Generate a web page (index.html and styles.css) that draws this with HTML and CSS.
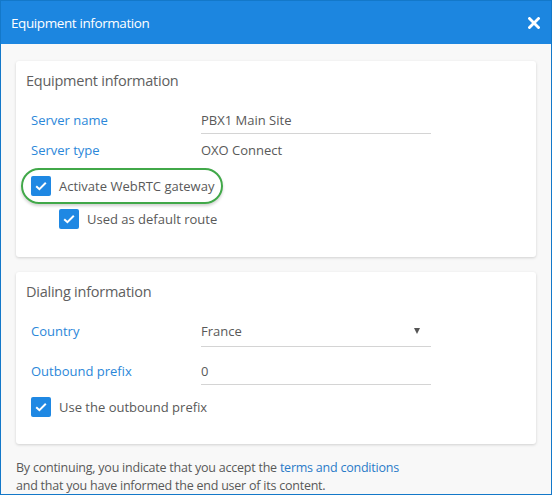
FILE: index.html
```html
<!DOCTYPE html>
<html>
<head>
<meta charset="utf-8">
<link rel="stylesheet" href="styles.css">
</head>
<body>
<div class="window">
  <div class="header">
    <span class="header-title">Equipment information</span>
    <svg class="close" width="12" height="12" viewBox="0 0 12 12"><path d="M1.5 1.5 L10.5 10.5 M10.5 1.5 L1.5 10.5" stroke="#fff" stroke-width="2.8" stroke-linecap="square"/></svg>
  </div>
  <div class="content">
    <div class="card card-equip">
      <div class="card-title">Equipment information</div>
      <div class="row">
        <span class="label">Server name</span>
        <span class="field field-input">PBX1 Main Site</span>
      </div>
      <div class="row">
        <span class="label">Server type</span>
        <span class="field">OXO Connect</span>
      </div>
      <div class="highlight">
        <span class="check"><svg width="20" height="20" viewBox="0 0 20 20"><path d="M5.2 10.2 L8.4 13.2 L14.8 6.8" fill="none" stroke="#fff" stroke-width="2"/></svg></span>
        <span class="check-label">Activate WebRTC gateway</span>
      </div>
      <div class="check-row sub">
        <span class="check"><svg width="20" height="20" viewBox="0 0 20 20"><path d="M5.2 10.2 L8.4 13.2 L14.8 6.8" fill="none" stroke="#fff" stroke-width="2"/></svg></span>
        <span class="check-label">Used as default route</span>
      </div>
    </div>
    <div class="card card-dial">
      <div class="card-title">Dialing information</div>
      <div class="row">
        <span class="label">Country</span>
        <span class="field field-select">France<span class="arrow"></span></span>
      </div>
      <div class="row row-gap">
        <span class="label">Outbound prefix</span>
        <span class="field field-input">0</span>
      </div>
      <div class="check-row plain">
        <span class="check"><svg width="20" height="20" viewBox="0 0 20 20"><path d="M5.2 10.2 L8.4 13.2 L14.8 6.8" fill="none" stroke="#fff" stroke-width="2"/></svg></span>
        <span class="check-label">Use the outbound prefix</span>
      </div>
    </div>
    <p class="footer">By continuing, you indicate that you accept the <a class="link">terms and conditions</a><br>and that you have informed the end user of its content.</p>
  </div>
</div>
</body>
</html>
```

FILE: styles.css
```css
html, body {
  margin: 0;
  padding: 0;
}
body {
  font-family: "Open Sans", "Noto Sans", sans-serif;
  color: #595959;
}
.window {
  width: 552px;
  height: 495px;
  box-sizing: border-box;
  border: 1px solid #1378c9;
  border-top: 0;
  background: #f8f8f8;
  overflow: hidden;
}
.header {
  height: 44px;
  background: #1c86e0;
  display: flex;
  align-items: center;
  justify-content: space-between;
  padding: 0 10px 0 10px;
  border-top: 1px solid #1378c9;
  box-sizing: border-box;
}
.header-title {
  color: #fff;
  font-size: 13.5px;
  letter-spacing: -0.4px;
  margin-top: 1px;
}
.close {
  display: block;
  margin-top: 1px;
  margin-right: 1px;
}
.content {
  padding: 17px 14px 0 15px;
}
.card {
  width: 520px;
  box-sizing: border-box;
  background: #fff;
  border-radius: 3px;
  box-shadow: 0 1px 3px rgba(0,0,0,0.16);
  padding: 10px 10px 0 10px;
}
.card-equip {
  height: 196px;
}
.card-dial {
  margin-top: 15px;
  height: 172px;
}
.card-title {
  font-size: 14.5px;
  letter-spacing: -0.25px;
  line-height: 20px;
  color: #606060;
  margin-bottom: 14px;
}
.row {
  display: flex;
  height: 30px;
  margin-left: 5px;
  font-size: 13px;
}
.row-gap {
  margin-top: 10px;
}
.label {
  width: 170px;
  line-height: 30px;
  color: #2b87d9;
}
.field {
  width: 230px;
  line-height: 30px;
  color: #595959;
  box-sizing: border-box;
}
.field-input {
  height: 29px;
  line-height: 30px;
  border-bottom: 1px solid #d4d4d4;
}
.field-select {
  height: 31px;
  line-height: 30px;
  border-bottom: 1px solid #d4d4d4;
  display: flex;
  align-items: center;
  justify-content: space-between;
  padding-right: 11px;
}
.arrow {
  width: 0;
  height: 0;
  border-left: 3px solid transparent;
  border-right: 3px solid transparent;
  border-top: 6px solid #555;
  margin-top: -1px;
}
.highlight {
  display: flex;
  align-items: center;
  width: 202px;
  height: 36px;
  box-sizing: border-box;
  border: 2px solid #41a849;
  border-radius: 18px;
  padding-left: 8px;
  margin-top: 3px;
  margin-left: -5px;
  box-shadow: 0 2px 3px rgba(0,0,0,0.18);
  font-size: 13px;
}
.check-row {
  display: flex;
  align-items: center;
  height: 20px;
  font-size: 13px;
}
.sub {
  margin-top: 5px;
  margin-left: 33px;
}
.plain {
  margin-top: 11px;
  margin-left: 5px;
}
.check {
  width: 20px;
  height: 20px;
  border-radius: 2px;
  background: #1f88e3;
  display: block;
  flex: none;
}
.check svg {
  display: block;
}
.check-label {
  margin-left: 8px;
  color: #595959;
}
.footer {
  margin: 15px 0 0 0;
  font-size: 12.5px;
  letter-spacing: -0.23px;
  line-height: 18px;
  color: #595959;
}
.link {
  color: #2a7bc8;
}
```
